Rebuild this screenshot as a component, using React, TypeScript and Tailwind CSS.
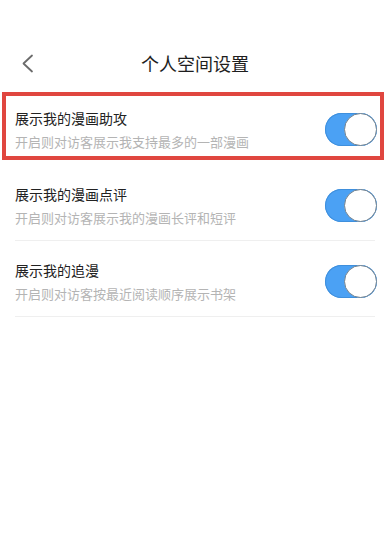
import React from "react";

const font = { fontFamily: '"Noto Sans CJK SC", "Noto Sans", sans-serif' };

function Toggle() {
  return (
    <div className="relative h-[33px] w-[52px] shrink-0 rounded-full bg-[#4ba1f4] shadow-[inset_0_0_0_1px_#3f8fdc]">
      <div className="absolute right-0 top-0 h-[33px] w-[33px] rounded-full border border-[#74838f] bg-white" />
    </div>
  );
}

function Row({ title, sub, highlight }: { title: string; sub: string; highlight?: boolean }) {
  return (
    <div className="relative h-[76px] px-[15px]">
      <div
        className={
          highlight
            ? "flex h-[75px] items-center pt-[4px]"
            : "flex h-[75px] items-center border-b border-[#efefef] pt-[4px]"
        }
      >
        <div className="flex flex-1 flex-col">
          <div className="text-[14px] leading-[20px] text-[#222]">{title}</div>
          <div className="mt-[5px] text-[13px] leading-[18px] text-[#b4b4b4]">{sub}</div>
        </div>
        <div className="mr-[-2px]">
          <Toggle />
        </div>
      </div>
      {highlight && (
        <div className="pointer-events-none absolute left-[2px] top-[2px] h-[68px] w-[382px] border-[4px] border-[#e0463f]" />
      )}
    </div>
  );
}

export default function App() {
  return (
    <div className="h-[534px] w-[390px] overflow-hidden bg-white" style={font}>
      <div className="relative h-[90px]">
        <div className="absolute left-0 right-0 top-[48px] flex h-[30px] items-center justify-center text-[18px] text-[#1e1e1e]">
          个人空间设置
        </div>
        <svg
          className="absolute left-[21px] top-[54px]"
          width="13"
          height="19"
          viewBox="0 0 13 19"
          fill="none"
        >
          <path d="M11 1.5 L2.5 9.5 L11 17.5" stroke="#6b6b6b" strokeWidth="1.8" strokeLinecap="round" strokeLinejoin="round" />
        </svg>
      </div>
      <Row title="展示我的漫画助攻" sub="开启则对访客展示我支持最多的一部漫画" highlight />
      <Row title="展示我的漫画点评" sub="开启则对访客展示我的漫画长评和短评" />
      <Row title="展示我的追漫" sub="开启则对访客按最近阅读顺序展示书架" />
    </div>
  );
}
